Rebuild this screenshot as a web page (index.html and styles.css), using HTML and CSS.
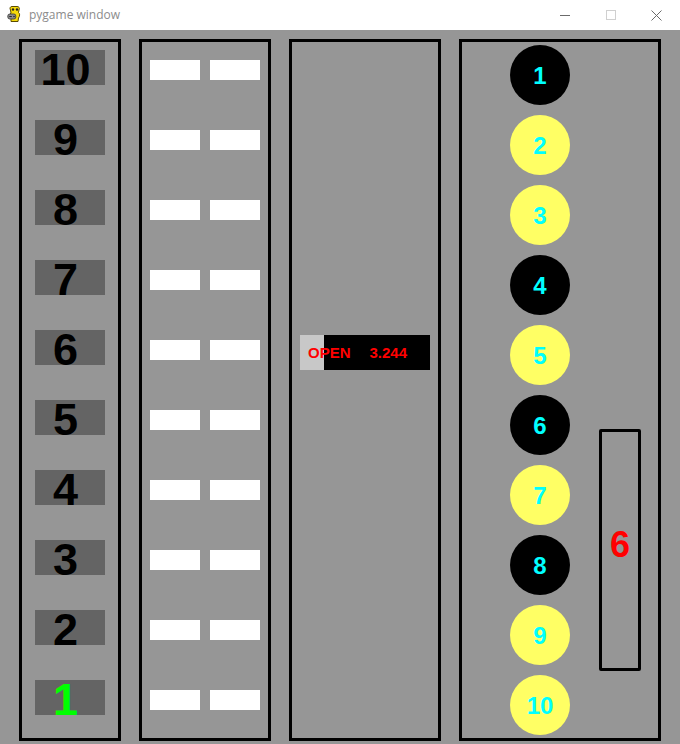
FILE: index.html
```html
<!DOCTYPE html>
<html lang="en">
<head>
<meta charset="utf-8">
<title>pygame window</title>
<link rel="stylesheet" href="styles.css">
</head>
<body>
<div class="window">
  <header class="titlebar">
    <svg class="app-icon" width="16" height="18" viewBox="0 0 16 18">
      <path d="M5 1.5 C3 1.5 2.5 3.5 3.5 5 L4 8 C2.5 9 2.5 12 4 14 L4 16.5 L11 16.5 L11.5 13 C13 11 13 8.5 11.5 7.5 L12 5 C13 3 12 1.5 10 1.5 Z" fill="#f5d90a" stroke="#5a4a00" stroke-width="1"/>
      <circle cx="6" cy="4.5" r="1.2" fill="#222"/>
      <circle cx="10" cy="4.5" r="1.2" fill="#222"/>
      <rect x="0.8" y="9" width="8" height="5" rx="2" fill="#8c8c8c" stroke="#333" stroke-width="0.8"/>
      <rect x="2.3" y="11" width="2.5" height="1" fill="#222"/>
      <circle cx="7" cy="11.5" r="0.8" fill="#222"/>
    </svg>
    <span class="title">pygame window</span>
    <div class="controls">
      <span class="ctl ctl-min"></span>
      <span class="ctl ctl-max"></span>
      <svg class="ctl-close" width="11" height="11" viewBox="0 0 11 11"><path d="M0.5 0.5 L10.5 10.5 M10.5 0.5 L0.5 10.5" stroke="#6b6b6b" stroke-width="1"/></svg>
    </div>
  </header>
  <main class="canvas">
    <section class="panel panel-floors">
      <div class="floor-label">10</div>
      <div class="floor-label">9</div>
      <div class="floor-label">8</div>
      <div class="floor-label">7</div>
      <div class="floor-label">6</div>
      <div class="floor-label">5</div>
      <div class="floor-label">4</div>
      <div class="floor-label">3</div>
      <div class="floor-label">2</div>
      <div class="floor-label current">1</div>
    </section>
    <section class="panel panel-doors">
      <div class="door-row"><span class="door"></span><span class="door"></span></div>
      <div class="door-row"><span class="door"></span><span class="door"></span></div>
      <div class="door-row"><span class="door"></span><span class="door"></span></div>
      <div class="door-row"><span class="door"></span><span class="door"></span></div>
      <div class="door-row"><span class="door"></span><span class="door"></span></div>
      <div class="door-row"><span class="door"></span><span class="door"></span></div>
      <div class="door-row"><span class="door"></span><span class="door"></span></div>
      <div class="door-row"><span class="door"></span><span class="door"></span></div>
      <div class="door-row"><span class="door"></span><span class="door"></span></div>
      <div class="door-row"><span class="door"></span><span class="door"></span></div>
    </section>
    <section class="panel panel-status">
      <div class="gauge">
        <span class="gauge-state">OPEN</span>
        <span class="gauge-value">3.244</span>
      </div>
    </section>
    <section class="panel panel-calls">
      <div class="buttons">
        <div class="btn off">1</div>
        <div class="btn on">2</div>
        <div class="btn on">3</div>
        <div class="btn off">4</div>
        <div class="btn on">5</div>
        <div class="btn off">6</div>
        <div class="btn on">7</div>
        <div class="btn off">8</div>
        <div class="btn on">9</div>
        <div class="btn on">10</div>
      </div>
      <div class="target">6</div>
    </section>
  </main>
</div>
</body>
</html>
```

FILE: styles.css
```css
* { box-sizing: border-box; }

html, body {
  margin: 0;
  padding: 0;
  background: #969696;
}

.window {
  width: 680px;
  height: 744px;
  overflow: hidden;
}

.titlebar {
  height: 30px;
  background: #ffffff;
  display: flex;
  align-items: center;
  padding-left: 7px;
}

.app-icon {
  display: block;
  margin-top: -2px;
}

.title {
  margin-left: 6px;
  font-family: "Open Sans", "Noto Sans", sans-serif;
  font-size: 12px;
  color: #8c8c8c;
  margin-top: -1px;
}

.controls {
  margin-left: auto;
  display: flex;
  align-items: center;
  height: 30px;
  padding-right: 18px;
  gap: 0;
}

.ctl-min {
  display: block;
  width: 10px;
  height: 1px;
  background: #6b6b6b;
  margin-right: 36px;
}

.ctl-max {
  display: block;
  width: 10px;
  height: 10px;
  border: 1px solid #d0d0d0;
  margin-right: 35px;
}

.ctl-close { display: block; }

.canvas {
  height: 714px;
  background: #969696;
  display: flex;
  align-items: flex-start;
  gap: 18px;
  padding: 9px 0 0 19px;
}

.panel {
  height: 702px;
  border: 3px solid #000;
  flex: none;
}

/* floor labels */
.panel-floors {
  width: 102px;
  padding: 8px 0 0 13px;
  display: flex;
  flex-direction: column;
  gap: 35px;
}

.floor-label {
  width: 70px;
  height: 35px;
  background: #646464;
  padding: 5px 9px 0 0;
  text-align: center;
  font-family: "Liberation Sans", Arial, sans-serif;
  font-weight: bold;
  font-size: 45px;
  line-height: 30px;
  color: #000;
}

.floor-label.current { color: #00ff00; }

/* doors */
.panel-doors {
  width: 132px;
  padding: 18px 0 0 8px;
  display: flex;
  flex-direction: column;
  gap: 50px;
}

.door-row {
  display: flex;
  gap: 10px;
}

.door {
  display: block;
  width: 50px;
  height: 20px;
  background: #ffffff;
}

/* status */
.panel-status {
  width: 152px;
  padding: 293px 0 0 8px;
}

.gauge {
  width: 130px;
  height: 35px;
  background: linear-gradient(to right, #c8c8c8 24px, #000000 24px);
  display: flex;
  align-items: center;
  padding-left: 8px;
  font-family: "Liberation Sans", Arial, sans-serif;
  font-weight: bold;
  font-size: 15px;
  line-height: 1;
  color: #ff0000;
}

.gauge-value { margin-left: 19px; }

/* call buttons */
.panel-calls {
  width: 202px;
  padding: 3px 0 0 48px;
  display: flex;
  align-items: flex-start;
  gap: 29px;
}

.buttons {
  display: flex;
  flex-direction: column;
  gap: 10px;
}

.btn {
  width: 60px;
  height: 60px;
  border-radius: 50%;
  display: flex;
  align-items: center;
  justify-content: center;
  font-family: "Liberation Sans", Arial, sans-serif;
  font-weight: bold;
  font-size: 24px;
  line-height: 1;
  color: #00ffff;
  padding-top: 2px;
}

.btn.off { background: #000000; }
.btn.on { background: #ffff64; }

.target {
  margin-top: 384px;
  width: 42px;
  height: 242px;
  border: 3px solid #000;
  border-radius: 2px;
  display: flex;
  align-items: center;
  justify-content: center;
  padding-bottom: 11px;
  font-family: "Liberation Sans", Arial, sans-serif;
  font-weight: bold;
  font-size: 36px;
  line-height: 1;
  color: #ff0000;
}
```
